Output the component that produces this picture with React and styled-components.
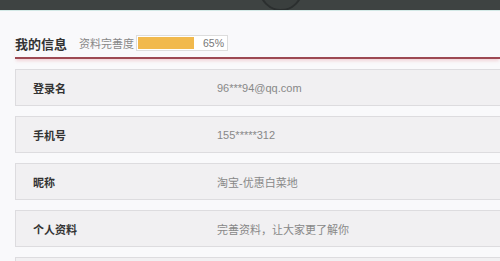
import React from 'react';
import styled, { createGlobalStyle } from 'styled-components';

const GlobalStyle = createGlobalStyle`
  html, body {
    margin: 0;
    padding: 0;
    background: #f9f9fb;
    font-family: 'Liberation Sans', Arial, 'Noto Sans CJK SC', sans-serif;
    overflow: hidden;
  }
`;

const TopBar = styled.div`
  position: relative;
  height: 10px;
  background: #3e4342;
  border-bottom: 1px solid #d3e9e6;
  overflow: hidden;
`;

const Avatar = styled.svg`
  position: absolute;
  left: 258px;
  top: -34px;
`;

const Page = styled.div`
  padding-left: 15px;
  overflow: hidden;
`;

const Header = styled.div`
  display: flex;
  align-items: center;
  height: 16px;
  margin-top: 24px;
  padding-bottom: 6px;
  border-bottom: 2px solid #9d4953;
  box-shadow: 0 3px 3px -1px rgba(236, 170, 178, 0.45);
`;

const Title = styled.h2`
  margin: 0 12px 0 0;
  font-size: 13px;
  font-weight: bold;
  color: #333;
`;

const Hint = styled.span`
  font-size: 11px;
  color: #888;
  margin-right: 2px;
`;

const Progress = styled.div`
  position: relative;
  width: 87px;
  height: 14px;
  border: 1px solid #ddd;
  background: #fff;
  display: flex;
  align-items: center;
  justify-content: flex-end;
  padding-right: 3px;
  box-sizing: content-box;
`;

const Fill = styled.div`
  position: absolute;
  left: 1px;
  top: 1px;
  bottom: 1px;
  background: #f1b94d;
`;

const Percent = styled.span`
  font-size: 10.5px;
  color: #777;
`;

const List = styled.div`
  display: flex;
  flex-direction: column;
  gap: 10px;
  margin-top: 10px;
  margin-right: -20px;
`;

const Row = styled.div`
  display: flex;
  align-items: center;
  height: 35px;
  background: #f1f0f2;
  border: 1px solid #dddcdf;
`;

const Label = styled.span`
  width: 184px;
  padding-left: 17px;
  font-size: 11px;
  font-weight: bold;
  color: #333;
`;

const Value = styled.span`
  font-size: 11px;
  color: #888;
`;

const rows = [
  ['登录名', '96***94@qq.com'],
  ['手机号', '155*****312'],
  ['昵称', '淘宝-优惠白菜地'],
  ['个人资料', '完善资料，让大家更了解你'],
  ['', ''],
];

export default function App() {
  return (
    <>
      <GlobalStyle />
      <TopBar>
        <Avatar width="46" height="46" viewBox="0 0 46 46">
          <circle cx="23" cy="23" r="21" fill="#3a3f3e" stroke="#2b2f2f" strokeWidth="2" />
        </Avatar>
      </TopBar>
      <Page>
        <Header>
          <Title>我的信息</Title>
          <Hint>资料完善度</Hint>
          <Progress>
            <Fill style={{ width: '56px' }} />
            <Percent>65%</Percent>
          </Progress>
        </Header>
        <List>
          {rows.map(([label, value], i) => (
            <Row key={i}>
              <Label>{label}</Label>
              <Value>{value}</Value>
            </Row>
          ))}
        </List>
      </Page>
    </>
  );
}
